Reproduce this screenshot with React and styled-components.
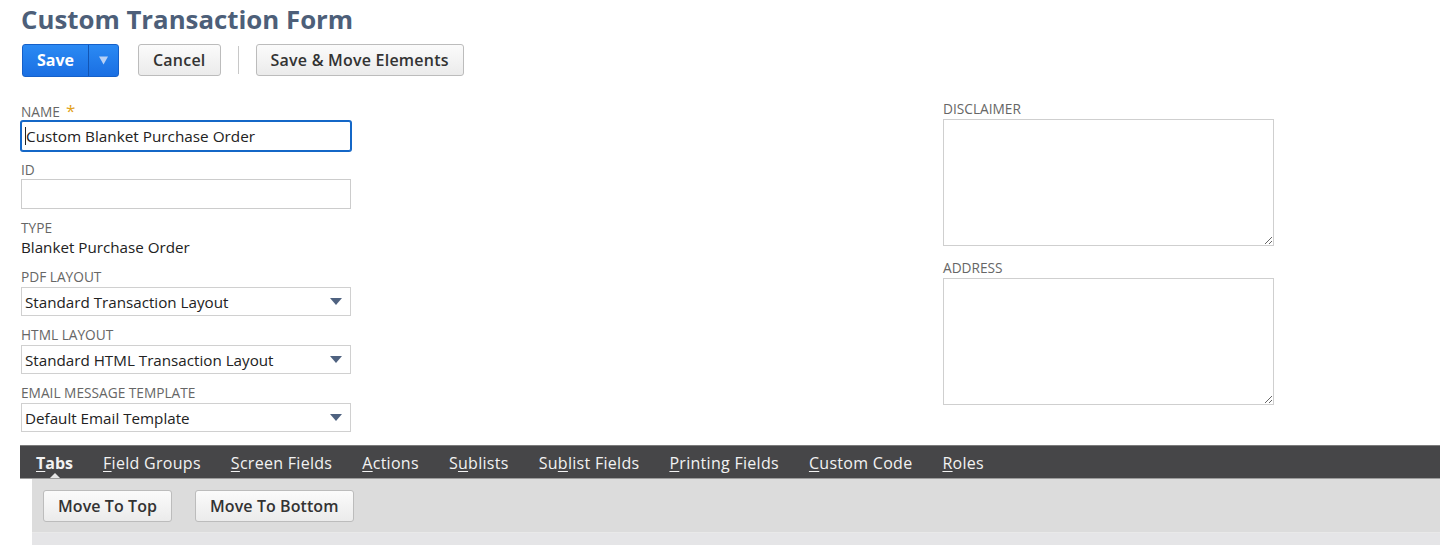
import React from "react";
import styled, { createGlobalStyle } from "styled-components";

const GlobalStyle = createGlobalStyle`
  html, body { margin: 0; padding: 0; background: #fff; }
  body { font-family: "Open Sans", "Liberation Sans", sans-serif; color: #333; }
  * { box-sizing: border-box; }
`;

const Page = styled.div`
  padding-top: 3px;
  width: 1440px;
  height: 545px;
  overflow: hidden;
`;

const Title = styled.h1`
  margin: 0;
  padding-left: 21px;
  font-size: 25.8px;
  line-height: 32px;
  font-weight: 700;
  color: #4d5f79;
`;

const Toolbar = styled.div`
  display: flex;
  align-items: center;
  padding-left: 22px;
  margin-top: 9px;
  height: 32px;
`;

const SplitButton = styled.div`
  display: flex;
  height: 33px;
  border: 1px solid #1560c9;
  border-radius: 3px;
  overflow: hidden;
  background: linear-gradient(#2b8af3, #1a6fe3);
`;

const SplitMain = styled.span`
  display: flex;
  align-items: center;
  padding: 0 14px;
  width: 66px;
  font-size: 16px;
  font-weight: 700;
  color: #fff;
  border-right: 1px solid #1255b3;
`;

const SplitArrow = styled.span`
  display: flex;
  align-items: center;
  justify-content: center;
  width: 29px;
`;

const Button = styled.button`
  display: inline-flex;
  align-items: center;
  height: 32px;
  margin-left: ${(p) => p.$ml || 0}px;
  padding: 0 14px;
  border: 1px solid #bcbcbc;
  border-radius: 3px;
  background: linear-gradient(#fbfbfb, #ebebeb);
  font-family: inherit;
  font-size: 16px;
  font-weight: 600;
  letter-spacing: ${(p) => p.$ls ?? 0.22}px;
  color: #333;
  white-space: nowrap;
`;

const Separator = styled.span`
  width: 1px;
  height: 28px;
  background: #c8c8c8;
  margin: 0 17px;
`;

const Form = styled.div`
  display: flex;
  align-items: flex-start;
  padding-left: 21px;
  margin-top: 28px;
`;

const LeftCol = styled.div`
  width: 922px;
  display: flex;
  flex-direction: column;
`;

const RightCol = styled.div`
  width: 331px;
  display: flex;
  flex-direction: column;
  margin-top: -3px;
`;

const Field = styled.div`
  display: flex;
  flex-direction: column;
  width: 330px;
  margin-bottom: ${(p) => p.$mb ?? 11}px;
`;

const Label = styled.div`
  font-size: 13.7px;
  line-height: 16px;
  color: #666;
  text-transform: uppercase;
  margin-bottom: ${(p) => p.$mb ?? 2}px;
`;

const Req = styled.span`
  color: #e3a21a;
  font-size: 17px;
  margin-left: 6px;
  line-height: 10px;
`;

const Input = styled.div`
  display: flex;
  align-items: center;
  height: 30px;
  padding-left: 3px;
  border: 1px solid ${(p) => (p.$focused ? "#1467c7" : "#cccccc")};
  box-shadow: ${(p) => (p.$focused ? "0 0 0 1px #1467c7" : "none")};
  border-radius: ${(p) => (p.$focused ? "2px" : "0")};
  background: #fff;
  font-size: 15.3px;
  color: #222;
`;

const Caret = styled.span`
  width: 1px;
  height: 18px;
  background: #222;
`;

const Value = styled.div`
  font-size: 15.2px;
  line-height: 20px;
  color: #222;
`;

const Select = styled.div`
  display: flex;
  align-items: center;
  justify-content: space-between;
  height: 29px;
  padding: 0 8px 0 3px;
  border: 1px solid #d0d0d0;
  background: #fff;
  font-size: 15.2px;
  color: #222;
`;

const TextArea = styled.textarea`
  display: block;
  width: 331px;
  height: 127px;
  border: 1px solid #cfcfcf;
  resize: both;
  font-family: inherit;
  outline: none;
`;

const TabsSection = styled.div`
  margin-top: 2px;
`;

const TabBar = styled.div`
  display: flex;
  margin-left: 20px;
  height: 34px;
  background: #464648;
  border-top: 1px solid #7b7b7b;
  border-bottom: 1px solid #9c9c9c;
  padding-left: 1px;
`;

const Tab = styled.span`
  position: relative;
  padding: 2px 15px 0;
  font-size: 16px;
  line-height: 30px;
  font-weight: ${(p) => (p.$active ? 700 : 400)};
  letter-spacing: ${(p) => (p.$active ? 0 : 0.29)}px;
  color: #f2f2f2;
  white-space: nowrap;

  u { text-decoration-thickness: 1px; text-underline-offset: 2px; }

  ${(p) =>
    p.$active &&
    `
    &::after {
      content: "";
      position: absolute;
      left: 50%;
      bottom: 0;
      margin-left: -5px;
      border-left: 5px solid transparent;
      border-right: 5px solid transparent;
      border-bottom: 5px solid #e6e6e6;
    }
  `}
`;

const Panel = styled.div`
  margin-left: 32px;
  background: #dcdcdc;
  padding: 11px 11px 10px;
  display: flex;
  gap: 23px;
`;

const PanelFooter = styled.div`
  margin-left: 32px;
  height: 20px;
  background: #e5e5e7;
  border-top: 1px solid #e9e9e9;
`;

const Arrow = ({ color = "#4f6280" }) => (
  <svg width={12} height={7} viewBox="0 0 12 7">
    <polygon points="0,0 12,0 6,7" fill={color} />
  </svg>
);

const SmallArrow = () => (
  <svg width={9} height={9} viewBox="0 0 9 9">
    <polygon points="0,0.5 9,0.5 4.5,8.5" fill="#b8d1f5" />
  </svg>
);

const tabs = [
  { pre: "", u: "T", post: "abs", active: true },
  { pre: "", u: "F", post: "ield Groups" },
  { pre: "", u: "S", post: "creen Fields" },
  { pre: "", u: "A", post: "ctions" },
  { pre: "S", u: "u", post: "blists" },
  { pre: "Su", u: "b", post: "list Fields" },
  { pre: "", u: "P", post: "rinting Fields" },
  { pre: "", u: "C", post: "ustom Code" },
  { pre: "", u: "R", post: "oles" },
];

const selects = [
  ["PDF Layout", "Standard Transaction Layout"],
  ["HTML Layout", "Standard HTML Transaction Layout"],
  ["Email Message Template", "Default Email Template"],
];

export default function App() {
  return (
    <Page>
      <GlobalStyle />
      <Title>Custom Transaction Form</Title>
      <Toolbar>
        <SplitButton>
          <SplitMain>Save</SplitMain>
          <SplitArrow>
            <SmallArrow />
          </SplitArrow>
        </SplitButton>
        <Button $ml={19}>Cancel</Button>
        <Separator />
        <Button>Save &amp; Move Elements</Button>
      </Toolbar>

      <Form>
        <LeftCol>
          <Field>
            <Label $mb={1}>
              Name<Req>*</Req>
            </Label>
            <Input $focused>
              <Caret />
              Custom Blanket Purchase Order
            </Input>
          </Field>
          <Field>
            <Label $mb={1}>ID</Label>
            <Input />
          </Field>
          <Field $mb={12}>
            <Label $mb={1}>Type</Label>
            <Value>Blanket Purchase Order</Value>
          </Field>
          {selects.map(([label, value]) => (
            <Field key={label}>
              <Label>{label}</Label>
              <Select>
                {value}
                <Arrow />
              </Select>
            </Field>
          ))}
        </LeftCol>
        <RightCol>
          <Field $mb={14}>
            <Label>Disclaimer</Label>
            <TextArea />
          </Field>
          <Field $mb={0}>
            <Label>Address</Label>
            <TextArea />
          </Field>
        </RightCol>
      </Form>

      <TabsSection>
        <TabBar>
          {tabs.map((t, i) => (
            <Tab key={i} $active={t.active}>
              {t.pre}
              <u>{t.u}</u>
              {t.post}
            </Tab>
          ))}
        </TabBar>
        <Panel>
          <Button $ls={0.08}>Move To Top</Button>
          <Button $ls={0.08}>Move To Bottom</Button>
        </Panel>
        <PanelFooter />
      </TabsSection>
    </Page>
  );
}
